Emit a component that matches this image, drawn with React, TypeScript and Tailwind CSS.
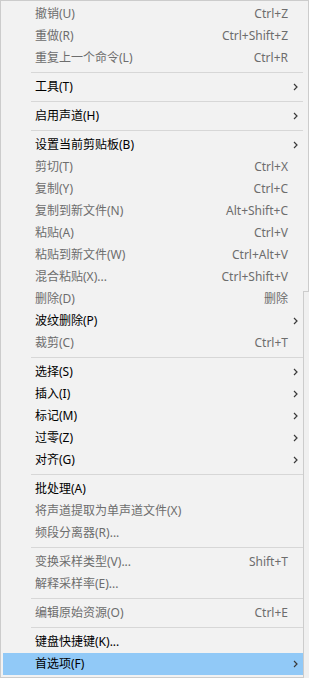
import React from 'react';

type Entry =
  | { sep: true }
  | { label: string; shortcut?: string; sub?: boolean; disabled?: boolean; active?: boolean };

const entries: Entry[] = [
  { label: '撤销(U)', shortcut: 'Ctrl+Z', disabled: true },
  { label: '重做(R)', shortcut: 'Ctrl+Shift+Z', disabled: true },
  { label: '重复上一个命令(L)', shortcut: 'Ctrl+R', disabled: true },
  { sep: true },
  { label: '工具(T)', sub: true },
  { sep: true },
  { label: '启用声道(H)', sub: true },
  { sep: true },
  { label: '设置当前剪贴板(B)', sub: true },
  { label: '剪切(T)', shortcut: 'Ctrl+X', disabled: true },
  { label: '复制(Y)', shortcut: 'Ctrl+C', disabled: true },
  { label: '复制到新文件(N)', shortcut: 'Alt+Shift+C', disabled: true },
  { label: '粘贴(A)', shortcut: 'Ctrl+V', disabled: true },
  { label: '粘贴到新文件(W)', shortcut: 'Ctrl+Alt+V', disabled: true },
  { label: '混合粘贴(X)...', shortcut: 'Ctrl+Shift+V', disabled: true },
  { label: '删除(D)', shortcut: '删除', disabled: true },
  { label: '波纹删除(P)', sub: true },
  { label: '裁剪(C)', shortcut: 'Ctrl+T', disabled: true },
  { sep: true },
  { label: '选择(S)', sub: true },
  { label: '插入(I)', sub: true },
  { label: '标记(M)', sub: true },
  { label: '过零(Z)', sub: true },
  { label: '对齐(G)', sub: true },
  { sep: true },
  { label: '批处理(A)' },
  { label: '将声道提取为单声道文件(X)', disabled: true },
  { label: '频段分离器(R)...', disabled: true },
  { sep: true },
  { label: '变换采样类型(V)...', shortcut: 'Shift+T', disabled: true },
  { label: '解释采样率(E)...', disabled: true },
  { sep: true },
  { label: '编辑原始资源(O)', shortcut: 'Ctrl+E', disabled: true },
  { sep: true },
  { label: '键盘快捷键(K)...' },
  { label: '首选项(F)', sub: true, active: true },
];

const Chevron = () => (
  <svg width="5" height="8" viewBox="0 0 5 8" className="block">
    <polyline points="1,1 4,4 1,7" fill="none" stroke="#3a3a3a" strokeWidth="1.2" />
  </svg>
);

export default function App() {
  return (
    <div
      className="relative w-[309px] h-[678px] bg-[#f0f0f0] text-[12px]"
      style={{ fontFamily: '"Noto Sans", "Noto Sans CJK SC", sans-serif' }}
    >
      {/* wider part of the upper menu edge */}
      <div className="absolute top-0 right-0 w-[6px] h-[292px] bg-[#f2f2f2] border-t border-r border-b border-[#cccccc]" />

      <div className="w-[304px] h-full border border-[#cccccc] bg-[#f2f2f2] pt-[2px] pb-[2px] pl-[2px]">
        {entries.map((e, i) =>
          'sep' in e ? (
            <div key={i} className="h-[7px] flex items-center pl-[28px]">
              <div className="h-px w-full bg-[#d7d7d7]" />
            </div>
          ) : (
            <div
              key={i}
              className={`h-[22px] flex items-center leading-[22px] ${
                e.active ? 'bg-[#91c9f7]' : ''
              } ${e.disabled ? 'text-[#6d6d6d]' : 'text-black'}`}
            >
              <span className="flex-1 pl-[32px] whitespace-nowrap">{e.label}</span>
              {e.shortcut && <span className="whitespace-nowrap">{e.shortcut}</span>}
              <span className="w-[15px] h-full flex items-center pl-[5px]">
                {e.sub && <Chevron />}
              </span>
            </div>
          )
        )}
      </div>
    </div>
  );
}
